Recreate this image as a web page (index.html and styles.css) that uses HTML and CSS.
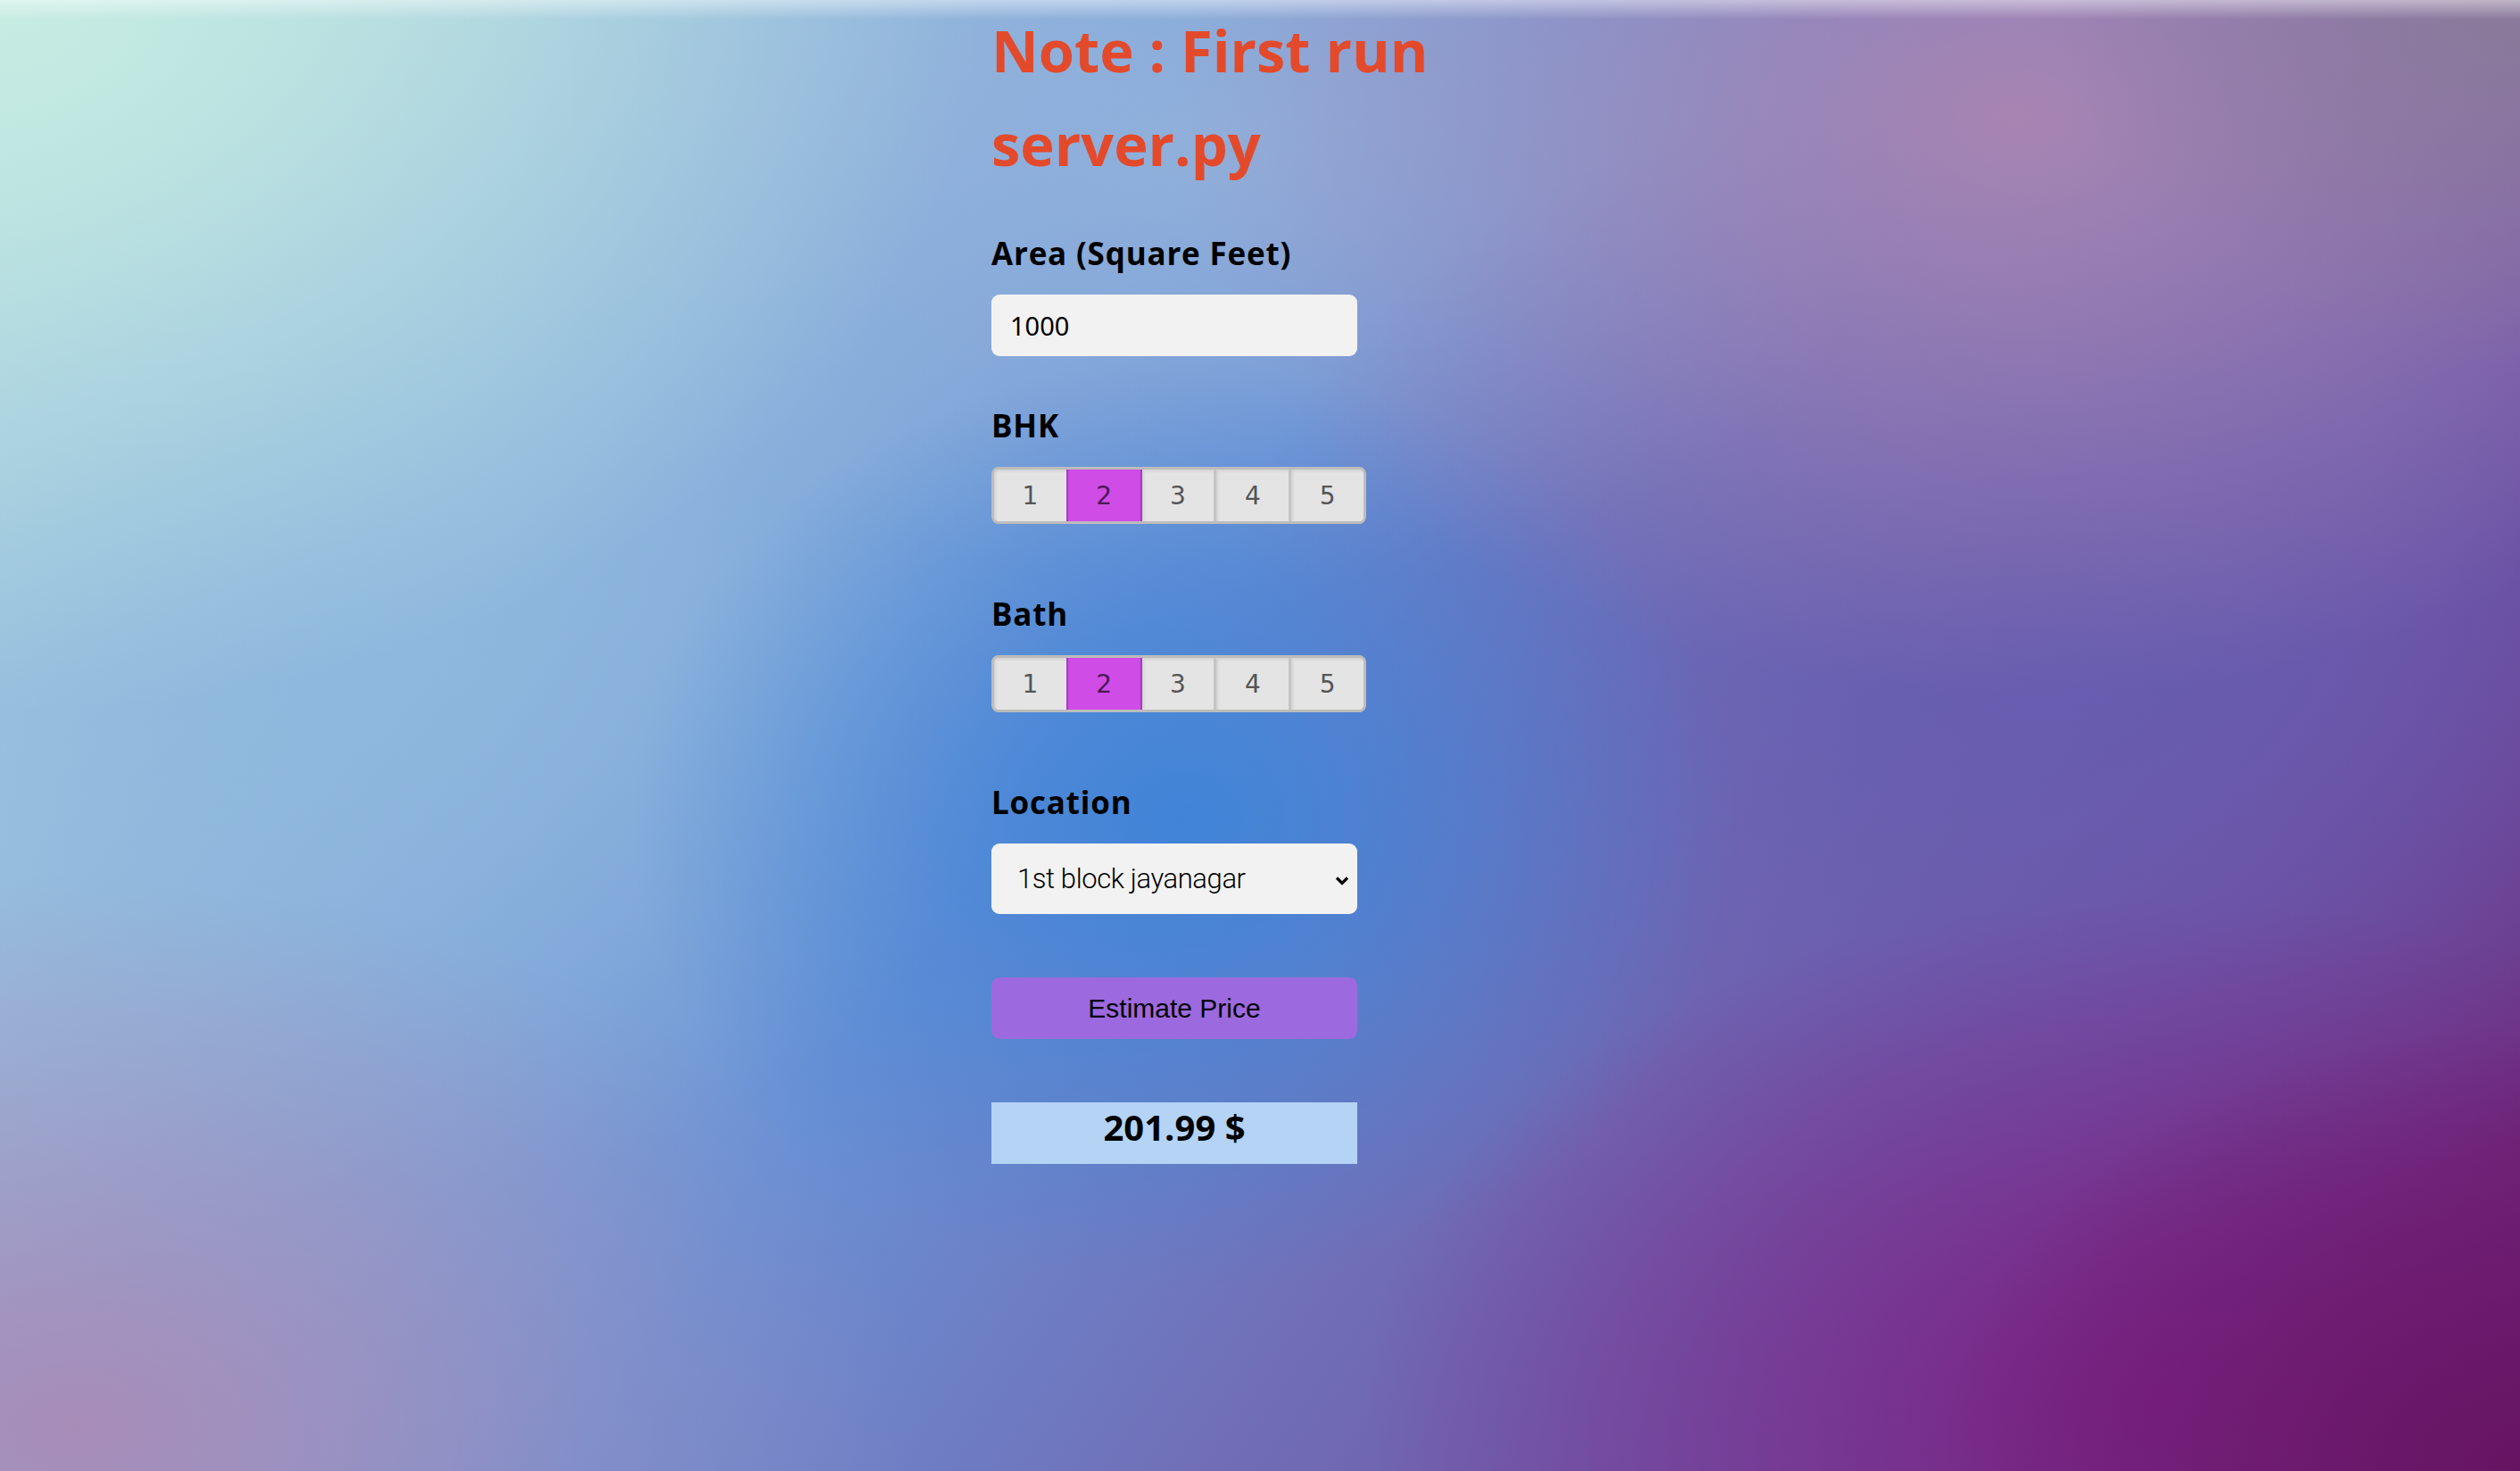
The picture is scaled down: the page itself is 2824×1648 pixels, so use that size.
FILE: index.html
```html
<!DOCTYPE html>
<html lang="en">
<head>
<meta charset="utf-8">
<title>Bangalore Home Price Prediction</title>
<link rel="stylesheet" href="styles.css">
</head>
<body>
<div class="top-fade"></div>
<main class="form">
  <h1 class="note">Note : First run server.py</h1>

  <label class="label" for="area">Area (Square Feet)</label>
  <input class="field" id="area" type="text" value="1000">

  <div class="label">BHK</div>
  <div class="switch">
    <span class="opt">1</span>
    <span class="opt on">2</span>
    <span class="opt">3</span>
    <span class="opt">4</span>
    <span class="opt">5</span>
  </div>

  <div class="label gap">Bath</div>
  <div class="switch">
    <span class="opt">1</span>
    <span class="opt on">2</span>
    <span class="opt">3</span>
    <span class="opt">4</span>
    <span class="opt">5</span>
  </div>

  <div class="label gap">Location</div>
  <div class="select">
    <span class="select-text">1st block jayanagar</span>
    <svg class="chev" viewBox="0 0 16 11" width="16" height="11"><path d="M2 2.5 L8 8.5 L14 2.5" fill="none" stroke="#000" stroke-width="3.2"/></svg>
  </div>

  <button class="estimate" type="button">Estimate Price</button>

  <div class="result">201.99 $</div>
</main>
</body>
</html>
```
FILE: styles.css
```css
html, body {
  margin: 0;
  padding: 0;
  height: 100%;
}
body {
  min-height: 1648px;
  font-family: "Open Sans", "DejaVu Sans", sans-serif;
  background:
    radial-gradient(ellipse 1100px 800px at 0% 0%, rgba(198,236,226,1), rgba(198,236,226,0) 100%),
    radial-gradient(ellipse 520px 420px at 100% 0%, rgba(140,124,150,0.85), rgba(140,124,150,0) 100%),
    radial-gradient(ellipse 950px 650px at 80% 8%, rgba(170,134,178,0.95), rgba(170,134,178,0) 100%),
    radial-gradient(ellipse 650px 500px at 100% 100%, rgba(102,20,98,1), rgba(102,20,98,0) 100%),
    radial-gradient(ellipse 900px 560px at 86% 95%, rgba(124,34,134,0.95), rgba(124,34,134,0) 100%),
    radial-gradient(ellipse 950px 620px at 3% 97%, rgba(168,140,184,1), rgba(168,140,184,0) 100%),
    radial-gradient(ellipse 620px 520px at 47% 56%, rgba(64,132,216,1), rgba(64,132,216,0) 100%),
    radial-gradient(ellipse 950px 650px at 82% 44%, rgba(102,92,176,0.95), rgba(102,92,176,0) 100%),
    radial-gradient(ellipse 800px 650px at 14% 42%, rgba(142,184,222,0.95), rgba(142,184,222,0) 100%),
    radial-gradient(ellipse 800px 500px at 48% 10%, rgba(150,180,220,0.8), rgba(150,180,220,0) 100%),
    linear-gradient(125deg, #b0d8e0 0%, #8fb5dc 25%, #6a90d4 45%, #7070b8 62%, #7050a2 80%, #6a1a6a 100%);
}
.top-fade {
  position: absolute;
  left: 0;
  top: 0;
  right: 0;
  height: 22px;
  background: linear-gradient(to bottom, rgba(255,255,255,0.45), rgba(255,255,255,0));
  pointer-events: none;
}
.form {
  width: 602px;
  margin: 0 auto;
  padding-top: 4px;
}
.note {
  margin: 0;
  width: 560px;
  font-size: 65px;
  line-height: 105px;
  font-weight: 700;
  color: #e34a2c;
}
.label {
  display: block;
  margin-top: 50px;
  margin-bottom: 26px;
  font-size: 35px;
  line-height: 40px;
  font-weight: 700;
  color: #000;
  letter-spacing: 0.8px;
}
.label.gap {
  margin-top: 81px;
}
.field {
  display: block;
  box-sizing: border-box;
  width: 410px;
  height: 69px;
  margin: 0;
  padding: 0 21px;
  border: none;
  border-radius: 9px;
  background: #f2f2f2;
  font-family: "Noto Sans", "Open Sans", sans-serif;
  font-size: 29px;
  color: #000;
  outline: none;
}
.field + .label {
  margin-top: 58px;
}
.switch {
  display: flex;
  width: 420px;
  height: 64px;
  box-sizing: border-box;
  border: 3px solid #bcbcbc;
  border-radius: 8px;
  overflow: hidden;
  background: #e3e3e3;
}
.opt {
  flex: 1;
  display: flex;
  align-items: center;
  justify-content: center;
  box-sizing: border-box;
  font-family: "DejaVu Sans", "Open Sans", sans-serif;
  font-size: 28px;
  color: #555;
  background: #e4e4e4;
  box-shadow: inset 2px 2px 3px rgba(0,0,0,0.08);
  border-left: 3px solid #c4c4c4;
}
.opt:first-child {
  border-left: none;
}
.opt.on {
  background: #cf4ce6;
  color: #4b1857;
  border: 2px solid #a53cc0;
  margin: -3px 0;
  box-shadow: none;
}
.opt.on + .opt {
  border-left: none;
}
.select {
  display: flex;
  align-items: center;
  justify-content: space-between;
  box-sizing: border-box;
  width: 410px;
  height: 79px;
  padding: 0 9px 0 29px;
  border-radius: 9px;
  background: #f2f2f2;
}
.select-text {
  font-family: Roboto, "Liberation Sans", sans-serif;
  font-weight: 300;
  font-size: 31px;
  color: #000;
  letter-spacing: -0.4px;
}
.chev {
  width: 16px;
  height: 11px;
  margin-top: 4px;
}
.estimate {
  display: block;
  width: 410px;
  height: 69px;
  margin: 71px 0 0;
  padding: 0;
  border: none;
  border-radius: 9px;
  background: #9d69df;
  font-family: "Liberation Sans", Arial, sans-serif;
  font-size: 30px;
  color: #000;
}
.result {
  width: 410px;
  height: 69px;
  margin-top: 71px;
  box-sizing: border-box;
  background: #b4d3f5;
  text-align: center;
  font-size: 40px;
  line-height: 56px;
  font-weight: 700;
  color: #000;
}
```
